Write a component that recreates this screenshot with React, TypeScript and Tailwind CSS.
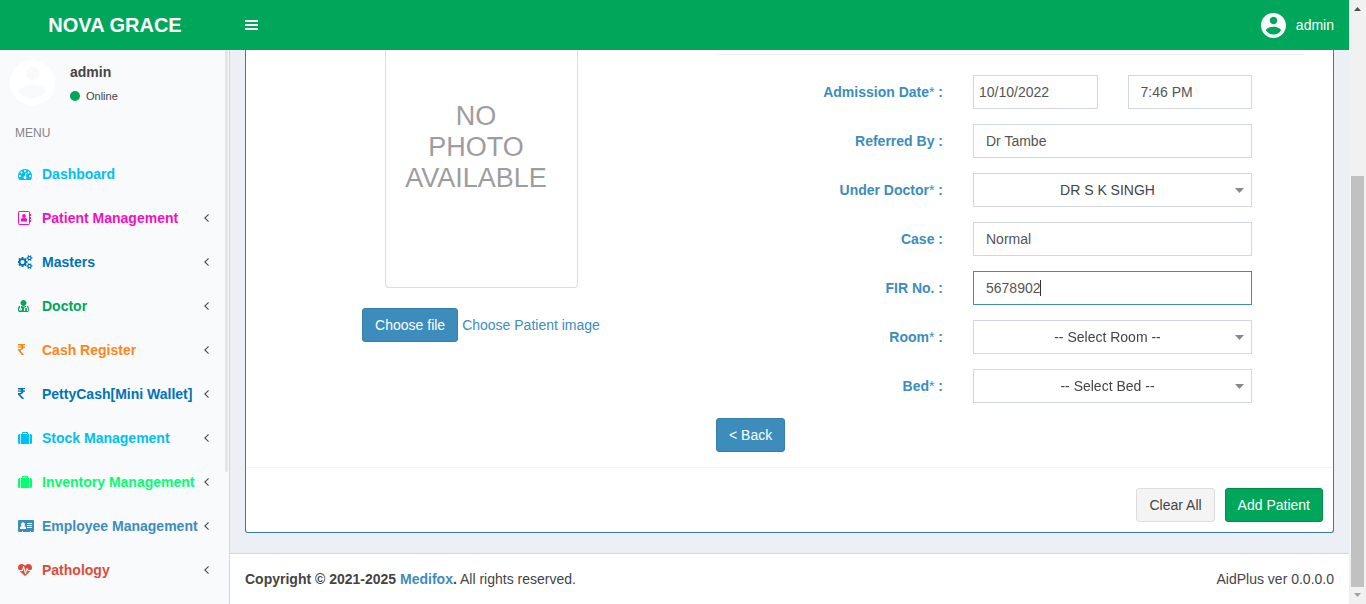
import React, { useEffect, useRef, useState } from "react";

const PATHS = {
  dashboard:
    "M384 1152q0-53-37.5-90.5t-90.5-37.5-90.5 37.5-37.5 90.5 37.5 90.5 90.5 37.5 90.5-37.5 37.5-90.5zm192-448q0-53-37.5-90.5t-90.5-37.5-90.5 37.5-37.5 90.5 37.5 90.5 90.5 37.5 90.5-37.5 37.5-90.5zm428 481l101-382q6-26-7.5-48.5t-38.5-29.5-48 6.5-30 39.5l-101 382q-60 5-107 43.5t-63 98.5q-20 77 20 146t117 89 146-20 89-117q16-60-6-117t-72-91zm660-33q0-53-37.5-90.5t-90.5-37.5-90.5 37.5-37.5 90.5 37.5 90.5 90.5 37.5 90.5-37.5 37.5-90.5zm-640-640q0-53-37.5-90.5t-90.5-37.5-90.5 37.5-37.5 90.5 37.5 90.5 90.5 37.5 90.5-37.5 37.5-90.5zm448 192q0-53-37.5-90.5t-90.5-37.5-90.5 37.5-37.5 90.5 37.5 90.5 90.5 37.5 90.5-37.5 37.5-90.5zm320 448q0 261-141 483-19 29-54 29h-1402q-35 0-54-29-141-221-141-483 0-182 71-348t191-286 286-191 348-71 348 71 286 191 191 286 71 348z",
  cogs:
    "M832 896q0-106-75-181t-181-75-181 75-75 181 75 181 181 75 181-75 75-181zm768 512q0-52-38-90t-90-38-90 38-38 90q0 53 37.5 90.5t90.5 37.5 90.5-37.5 37.5-90.5zm0-1024q0-52-38-90t-90-38-90 38-38 90q0 53 37.5 90.5t90.5 37.5 90.5-37.5 37.5-90.5zm-384 421v185q0 10-7 19.5t-16 10.5l-155 24q-11 35-32 76 34 48 90 115 7 11 7 20 0 12-7 19-23 30-82.5 89.5t-78.5 59.5q-11 0-21-7l-115-90q-37 19-77 31-11 108-23 155-7 24-30 24h-186q-11 0-20-7.5t-10-17.5l-23-153q-34-10-75-31l-118 89q-7 7-20 7-11 0-21-8-144-133-144-160 0-9 7-19 10-14 41-53t47-61q-23-44-35-82l-152-24q-10-1-17-9.5t-7-19.5v-185q0-10 7-19.5t16-10.5l155-24q11-35 32-76-34-48-90-115-7-11-7-20 0-12 7-20 22-30 82-89t79-59q11 0 21 7l115 90q34-18 77-32 11-108 23-154 7-24 30-24h186q11 0 20 7.5t10 17.5l23 153q34 10 75 31l118-89q8-7 20-7 11 0 21 8 144 133 144 160 0 8-7 19-12 16-42 54t-45 60q23 48 34 82l152 23q10 2 17 10.5t7 19.5zm640 533v140q0 16-149 31-12 27-30 52 51 113 51 138 0 4-4 7-122 71-124 71-8 0-46-47t-52-68q-20 2-30 2t-30-2q-14 21-52 68t-46 47q-2 0-124-71-4-3-4-7 0-25 51-138-18-25-30-52-149-15-149-31v-140q0-16 149-31 13-29 30-52-51-113-51-138 0-4 4-7 4-2 35-20t59-34 30-16q8 0 46 46.5t52 67.5q20-2 30-2t30 2q51-71 92-112l6-2q4 0 124 70 4 3 4 7 0 25-51 138 17 23 30 52 149 15 149 31zm0-1024v140q0 16-149 31-12 27-30 52 51 113 51 138 0 4-4 7-122 71-124 71-8 0-46-47t-52-68q-20 2-30 2t-30-2q-14 21-52 68t-46 47q-2 0-124-71-4-3-4-7 0-25 51-138-18-25-30-52-149-15-149-31v-140q0-16 149-31 13-29 30-52-51-113-51-138 0-4 4-7 4-2 35-20t59-34 30-16q8 0 46 46.5t52 67.5q20-2 30-2t30 2q51-71 92-112l6-2q4 0 124 70 4 3 4 7 0 25-51 138 17 23 30 52 149 15 149 31z",
  doctor:
    "M576 1408q0 26-19 45t-45 19-45-19-19-45 19-45 45-19 45 19 19 45zm1024-13q0 121-73 191t-194 70h-874q-121 0-194-70t-73-191q0-68 5.5-131t24-138 47.5-132.5 81-103 120-60.5q-22 52-22 120v203q-58 20-93 70t-35 111q0 80 56 136t136 56 136-56 56-136q0-61-35.5-111t-92.5-70v-203q0-62 25-93 132 104 295 104t295-104q25 31 25 93v64q-106 0-181 75t-75 181v89q-32 29-32 71 0 40 28 68t68 28 68-28 28-68q0-42-32-71v-89q0-52 38-90t90-38 90 38 38 90v89q-32 29-32 71 0 40 28 68t68 28 68-28 28-68q0-42-32-71v-89q0-68-34.5-127.5t-93.5-93.5q0-10 .5-42.5t0-48-2.5-41.5-7-47-13-40q68 15 120 60.5t81 103 47.5 132.5 24 138 5.5 131zm-320-883q0 159-112.5 271.5t-271.5 112.5-271.5-112.5-112.5-271.5 112.5-271.5 271.5-112.5 271.5 112.5 112.5 271.5z",
  rupee:
    "M1345 470v102q0 14-9 23t-23 9h-168q-23 144-129 234t-276 110q167 178 459 536 14 16 4 34-8 18-29 18h-195q-16 0-25-12-306-367-498-571-9-9-9-22v-127q0-13 9.5-22.5t22.5-9.5h112q132 0 212.5-43t102.5-125h-427q-14 0-23-9t-9-23v-102q0-14 9-23t23-9h413q-57-113-268-113h-145q-13 0-22.5-9.5t-9.5-22.5v-133q0-14 9-23t23-9h832q14 0 23 9t9 23v102q0 14-9 23t-23 9h-233q47 61 64 144h171q14 0 23 9t9 23z",
  heartbeat:
    "M1280 896h305q-5 6-10 10.5t-9 7.5l-3 4-623 600q-18 18-44 18t-44-18l-624-602q-5-2-21-20h369q22 0 39.5-13.5t22.5-34.5l70-281 190 667q6 20 23 33t39 13q21 0 38-13t23-33l146-485 56 112q18 35 57 35zm512-428q0 145-103 300h-369l-111-221q-8-17-25.5-27t-36.5-8q-45 5-56 46l-129 430-196-686q-6-20-23.5-33t-39.5-13-39 13.5-22 34.5l-116 464h-423q-103-155-103-300 0-220 127-344t351-124q62 0 126.5 21.5t120 58 95.5 68.5 76 68q36-36 76-68t95.5-68.5 120-58 126.5-21.5q224 0 351 124t127 344z",
  angle:
    "M1203 544q0 13-10 23l-393 393 393 393q10 10 10 23t-10 23l-50 50q-10 10-23 10t-23-10l-466-466q-10-10-10-23t10-23l466-466q10-10 23-10t23 10l50 50q10 10 10 23z",
};

const Dashboard = () => (
  <svg viewBox="0 0 1792 1792" width="14" height="14" fill="currentColor" aria-hidden="true"><path d={PATHS.dashboard} /></svg>
);
const Cogs = () => (
  <svg viewBox="0 0 1920 1792" width="15" height="14" fill="currentColor" aria-hidden="true"><path d={PATHS.cogs} /></svg>
);
const Doctor = () => (
  <svg viewBox="192 0 1408 1792" width="11" height="14" fill="currentColor" aria-hidden="true"><path d={PATHS.doctor} /></svg>
);
const Rupee = () => (
  <svg viewBox="447 0 1024 1792" width="8" height="14" fill="currentColor" aria-hidden="true"><path d={PATHS.rupee} /></svg>
);
const Suitcase = () => (
  <svg viewBox="0 0 14 14" width="14" height="14" fill="currentColor" aria-hidden="true">
    <path
      fillRule="evenodd"
      d="M2.300 3v10H1.500A1.500 1.500 0 0 1 0 11.500v-7A1.500 1.500 0 0 1 1.500 3zM11 3v10H3V3h1V1.700A.7.7 0 0 1 4.700 1h4.600a.7.7 0 0 1 .7.700V3zM5 2v1h4V2zM11.700 3h.8A1.500 1.500 0 0 1 14 4.500v7a1.500 1.500 0 0 1-1.500 1.500h-.8z"
    />
  </svg>
);
const Heartbeat = () => (
  <svg viewBox="0 -128 1792 1792" width="14" height="14" fill="currentColor" aria-hidden="true"><path d={PATHS.heartbeat} /></svg>
);
const AddressBook = () => (
  <svg viewBox="0 0 14 14" width="14" height="14" fill="currentColor" aria-hidden="true">
    <rect x="0.5" y="0.5" width="11" height="13" rx="0.8" fill="none" stroke="currentColor" />
    <path d="M12 3h1v2h-1zM12 6h1v2h-1zM12 9h1v2h-1z" />
    <circle cx="6" cy="5" r="1.9" />
    <path d="M3 10.500V9.200C3 7.800 3.600 7 4.600 6.800c.8.6 2 .6 2.800 0C8.400 7 9 7.800 9 9.200v1.300z" />
  </svg>
);
const AddressCard = () => (
  <svg viewBox="0 0 16 14" width="16" height="14" fill="currentColor" aria-hidden="true">
    <path
      fillRule="evenodd"
      d="M1 1h14a1 1 0 0 1 1 1v10a1 1 0 0 1-1 1h-2v-1h-1v1H5v-1H4v1H1a1 1 0 0 1-1-1V2a1 1 0 0 1 1-1zM2 10h6V9c0-1.200-.7-2-1.600-2.100a2 2 0 1 0-2.800 0C2.700 7 2 7.800 2 9zM9 4v1h5V4zM9 6v1h5V6zM9 8v1h5V8z"
    />
  </svg>
);
const Account = ({ className }: { className: string }) => (
  <svg viewBox="2 2 20 20" className={className} fill="currentColor" aria-hidden="true">
    <path d="M12 2C6.480 2 2 6.480 2 12s4.480 10 10 10 10-4.480 10-10S17.520 2 12 2zm0 3c1.660 0 3 1.340 3 3s-1.340 3-3 3-3-1.340-3-3 1.340-3 3-3zm0 14.200c-2.500 0-4.710-1.280-6-3.220.03-1.990 4-3.080 6-3.080 1.990 0 5.970 1.090 6 3.080-1.290 1.940-3.500 3.220-6 3.220z" />
  </svg>
);

const MENU = [
  { label: "Dashboard", color: "text-[#00c0ef]", Icon: Dashboard, leaf: true },
  { label: "Patient Management", color: "text-[#f012be]", Icon: AddressBook },
  { label: "Masters", color: "text-[#0073b7]", Icon: Cogs },
  { label: "Doctor", color: "text-[#00a65a]", Icon: Doctor },
  { label: "Cash Register", color: "text-[#ff851b]", Icon: Rupee },
  { label: "PettyCash[Mini Wallet]", color: "text-[#0073b7]", Icon: Rupee },
  { label: "Stock Management", color: "text-[#00c0ef]", Icon: Suitcase },
  { label: "Inventory Management", color: "text-[#01ff70]", Icon: Suitcase },
  { label: "Employee Management", color: "text-[#3c8dbc]", Icon: AddressCard },
  { label: "Pathology", color: "text-[#dd4b39]", Icon: Heartbeat },
];

const FIELD =
  "h-[34px] w-full min-w-0 border border-[#d2d6de] bg-white text-[#555] outline-none focus:border-[#3c8dbc]";

function Row({ id, label, required, children }: { id: string; label: string; required?: boolean; children: React.ReactNode }) {
  return (
    <div className="grid grid-cols-[227fr_279fr] items-center gap-[30px] pr-[51px]">
      <label htmlFor={id} className="text-right font-bold text-[#3c8dbc]">
        {label}
        {required && <span className="font-normal">*</span>} :
      </label>
      {children}
    </div>
  );
}

function Select({ id, option }: { id: string; option: string }) {
  return (
    <div className="relative">
      <select id={id} className="h-[34px] w-full appearance-none border border-[#d2d6de] bg-white pr-5 pl-[10px] text-center text-[#444] outline-none [text-align-last:center]">
        <option>{option}</option>
      </select>
      <svg viewBox="0 0 8 4" className="pointer-events-none absolute top-[15px] right-2 h-[5px] w-[9px]" preserveAspectRatio="none" fill="#888" aria-hidden="true">
        <path d="M0 0h8L4 4z" />
      </svg>
    </div>
  );
}

// Digits share one advance width, so the caret can be placed in ch units.
function NumberField({ id, initial }: { id: string; initial: string }) {
  const input = useRef<HTMLInputElement>(null);
  const [value, setValue] = useState(initial);
  const [caret, setCaret] = useState<number | null>(initial.length);

  useEffect(() => {
    const el = input.current;
    if (el) {
      el.focus();
      el.setSelectionRange(el.value.length, el.value.length);
    }
  }, []);

  return (
    <div className="relative">
      <input
        id={id}
        ref={input}
        inputMode="numeric"
        value={value}
        onChange={(e) => setValue(e.target.value.replace(/\D/g, ""))}
        onSelect={(e) => setCaret(e.currentTarget.selectionStart)}
        onBlur={() => setCaret(null)}
        className={`${FIELD} px-3 caret-transparent`}
      />
      {caret !== null && (
        <span
          className="pointer-events-none absolute top-[9px] h-4 w-px bg-[#333]"
          style={{ left: `calc(12px + ${caret}ch)` }}
        />
      )}
    </div>
  );
}

export default function App() {
  return (
    <div className="flex h-screen overflow-hidden bg-[#ecf0f5] font-['Liberation_Sans',Arial,sans-serif] text-sm leading-5 text-[#333]">
      <div className="flex min-w-0 flex-1 flex-col">
        <header className="flex h-[50px] shrink-0 items-center bg-[#00a65a] text-white">
          <a href="#" className="w-[230px] text-center text-xl font-bold">NOVA GRACE</a>
          <button type="button" aria-label="Toggle navigation" className="p-[15px]">
            <svg viewBox="0 0 13 10" width="13" height="10" fill="currentColor" aria-hidden="true">
              <path d="M0 0h13v2H0zM0 4h13v2H0zM0 8h13v2H0z" />
            </svg>
          </button>
          <a href="#" className="ml-auto flex items-center gap-[10px] pr-[15px]">
            <Account className="size-[25px]" />
            <span>admin</span>
          </a>
        </header>

        <div className="flex min-h-0 flex-1">
          <aside className="flex w-[230px] shrink-0 border-r border-[#d2d6de] bg-[#f9fafc]">
            <div className="min-w-0 flex-1">
              <div className="flex gap-[15px] p-[10px]">
                <Account className="size-[45px] text-white" />
                <div className="flex flex-col gap-1 pt-[2px] text-[#444]">
                  <p className="font-bold">admin</p>
                  <a href="#" className="flex items-center gap-[6px] text-[11px]">
                    <span className="size-[10px] rounded-full bg-[#00a65a]" />
                    Online
                  </a>
                </div>
              </div>
              <h2 className="px-[15px] pt-2 pb-[10px] text-xs leading-[18px] text-[#848484]">MENU</h2>
              <nav>
                {MENU.map(({ label, color, Icon, leaf }) => (
                  <a key={label} href="#" className={`flex h-11 items-center pl-[18px] font-bold whitespace-nowrap ${color}`}>
                    <span className="w-6 shrink-0"><Icon /></span>
                    <span>{label}</span>
                    {!leaf && (
                      <svg viewBox="588 64 640 1792" width="5" height="14" className="mr-4 ml-auto shrink-0" fill="#444" aria-hidden="true">
                        <path d={PATHS.angle} />
                      </svg>
                    )}
                  </a>
                ))}
              </nav>
            </div>
            <div className="mr-px h-[422px] w-[3px] rounded-b bg-[#e4e6e8]" />
          </aside>

          <div className="flex min-w-0 flex-1 flex-col">
            <main className="flex-1 px-[15px] pb-5">
              <form className="rounded-b-[3px] border-x border-b border-[#337ab7] bg-white" onSubmit={(e) => e.preventDefault()}>
                <div className="grid grid-cols-[470fr_587fr] pr-[30px] pb-[15px]">
                  <section className="flex flex-col items-center gap-5">
                    <div className="flex h-[238px] w-[193px] flex-col rounded-b border-x border-b border-[#ddd] pt-[51px] pr-[10px] text-center text-[27px] leading-[31px] text-[#9d9d9d]">
                      <span>NO</span>
                      <span>PHOTO</span>
                      <span>AVAILABLE</span>
                    </div>
                    <div className="flex items-center gap-1">
                      <label htmlFor="photo" className="cursor-pointer rounded-[3px] border border-[#367fa9] bg-[#3c8dbc] px-3 py-[6px] text-white">Choose file</label>
                      <input id="photo" type="file" className="sr-only" />
                      <span className="text-[#3c8dbc]">Choose Patient image</span>
                    </div>
                  </section>

                  <section className="flex flex-col gap-[15px]">
                    <hr className="mt-1 mb-[5px] border-[#eee]" />
                    <Row id="date" label="Admission Date" required>
                      <div className="grid grid-cols-2 gap-[30px]">
                        <input id="date" defaultValue="10/10/2022" className={`${FIELD} px-[5px]`} />
                        <input aria-label="Admission Time" defaultValue="7:46 PM" className={`${FIELD} px-3`} />
                      </div>
                    </Row>
                    <Row id="ref" label="Referred By">
                      <input id="ref" defaultValue="Dr Tambe" className={`${FIELD} px-3`} />
                    </Row>
                    <Row id="doctor" label="Under Doctor" required>
                      <Select id="doctor" option="DR S K SINGH" />
                    </Row>
                    <Row id="case" label="Case">
                      <input id="case" defaultValue="Normal" className={`${FIELD} px-3`} />
                    </Row>
                    <Row id="fir" label="FIR No.">
                      <NumberField id="fir" initial="5678902" />
                    </Row>
                    <Row id="room" label="Room" required>
                      <Select id="room" option="-- Select Room --" />
                    </Row>
                    <Row id="bed" label="Bed" required>
                      <Select id="bed" option="-- Select Bed --" />
                    </Row>
                    <button type="button" className="self-start rounded-[3px] border border-[#367fa9] bg-[#3c8dbc] px-3 py-[6px] text-white">&lt; Back</button>
                  </section>
                </div>
                <div className="flex justify-end gap-[10px] border-t border-[#f4f4f4] px-[10px] pt-5 pb-[10px]">
                  <button type="reset" className="rounded-[3px] border border-[#ddd] bg-[#f4f4f4] px-3 py-[6px] text-[#444]">Clear All</button>
                  <button type="submit" className="rounded-[3px] border border-[#008d4c] bg-[#00a65a] px-3 py-[6px] text-white">Add Patient</button>
                </div>
              </form>
            </main>
            <footer className="flex justify-between border-t border-[#d2d6de] bg-white p-[15px] text-[#444]">
              <p>
                <b>Copyright © 2021-2025 <a href="#" className="text-[#3c8dbc]">Medifox</a>.</b> All rights reserved.
              </p>
              <p>AidPlus ver 0.0.0.0</p>
            </footer>
          </div>
        </div>
      </div>

      <div className="flex w-[17px] shrink-0 flex-col items-center bg-[#f1f1f1]" aria-hidden="true">
        <svg viewBox="0 0 17 17" className="h-[17px] w-[17px]"><path d="M5 11h7L8.500 7z" fill="#505050" /></svg>
        <div className="flex-[159]" />
        <div className="w-[13px] flex-[411] bg-[#c1c1c1]" />
        <svg viewBox="0 0 17 17" className="h-[17px] w-[17px]"><path d="M5 6h7l-3.500 4z" fill="#a3a3a3" /></svg>
      </div>
    </div>
  );
}
